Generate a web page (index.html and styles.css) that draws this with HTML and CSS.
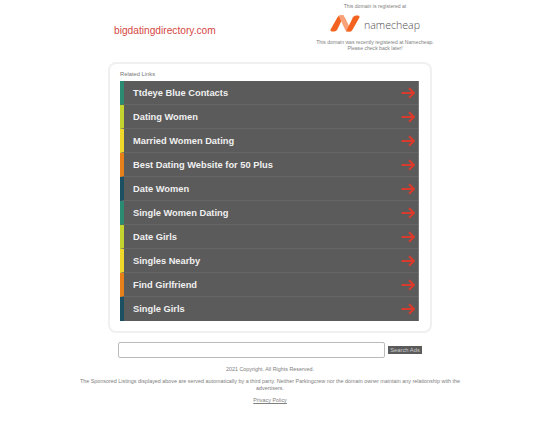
FILE: index.html
```html
<!DOCTYPE html>
<html lang="en">
<head>
    <meta charset="UTF-8">
    <title>bigdatingdirectory.com</title>
    <link rel="stylesheet" href="styles.css">
</head>
<body>
    <div class="wrapper">
        <header class="top">
            <h1 class="domain">bigdatingdirectory.com</h1>
            <div class="registrar">
                <p>This domain is registered at</p>
                <div class="logo">
                    <svg width="30" height="17" viewBox="0 0 30 17">
                        <path d="M0.6 14.6 L7.6 2 Q8.5 0.4 10.5 0.4 L14 0.4 L7.2 14.8 Q6.2 16.6 4.2 16.6 L1.8 16.6 Q0 16.6 0.6 14.6Z" fill="#f4621f"/>
                        <path d="M8.5 0.4 L11.5 0.4 Q14 0.4 15 2.6 L21.5 16.6 L18.5 16.6 Q16 16.6 15 14.4Z" fill="#f9a27a"/>
                        <path d="M16 16.6 L23 2.2 Q24 0.4 26 0.4 L28.2 0.4 Q30 0.4 29.4 2.4 L22.4 15 Q21.5 16.6 19.5 16.6Z" fill="#f4621f"/>
                    </svg>
                    <span class="logo-name">namecheap</span>
                </div>
                <p class="notice">This domain was recently registered at Namecheap.<br>Please check back later!</p>
            </div>
        </header>

        <main class="panel">
            <div class="panel-title">Related Links</div>
            <ul class="links">
                <li class="link c1"><a href="#">Ttdeye Blue Contacts</a><svg class="arrow" viewBox="0 0 14 12"><path d="M0.5 6 H13 M8 1.2 L13 6 L8 10.8" /></svg></li>
                <li class="link c2"><a href="#">Dating Women</a><svg class="arrow" viewBox="0 0 14 12"><path d="M0.5 6 H13 M8 1.2 L13 6 L8 10.8" /></svg></li>
                <li class="link c3"><a href="#">Married Women Dating</a><svg class="arrow" viewBox="0 0 14 12"><path d="M0.5 6 H13 M8 1.2 L13 6 L8 10.8" /></svg></li>
                <li class="link c4"><a href="#">Best Dating Website for 50 Plus</a><svg class="arrow" viewBox="0 0 14 12"><path d="M0.5 6 H13 M8 1.2 L13 6 L8 10.8" /></svg></li>
                <li class="link c5"><a href="#">Date Women</a><svg class="arrow" viewBox="0 0 14 12"><path d="M0.5 6 H13 M8 1.2 L13 6 L8 10.8" /></svg></li>
                <li class="link c1"><a href="#">Single Women Dating</a><svg class="arrow" viewBox="0 0 14 12"><path d="M0.5 6 H13 M8 1.2 L13 6 L8 10.8" /></svg></li>
                <li class="link c2"><a href="#">Date Girls</a><svg class="arrow" viewBox="0 0 14 12"><path d="M0.5 6 H13 M8 1.2 L13 6 L8 10.8" /></svg></li>
                <li class="link c3"><a href="#">Singles Nearby</a><svg class="arrow" viewBox="0 0 14 12"><path d="M0.5 6 H13 M8 1.2 L13 6 L8 10.8" /></svg></li>
                <li class="link c4"><a href="#">Find Girlfriend</a><svg class="arrow" viewBox="0 0 14 12"><path d="M0.5 6 H13 M8 1.2 L13 6 L8 10.8" /></svg></li>
                <li class="link c5"><a href="#">Single Girls</a><svg class="arrow" viewBox="0 0 14 12"><path d="M0.5 6 H13 M8 1.2 L13 6 L8 10.8" /></svg></li>
            </ul>
        </main>

        <form class="search">
            <input class="search-input" type="text">
            <button class="search-btn" type="button">Search Ads</button>
        </form>

        <footer class="footer">
            <p>2021 Copyright. All Rights Reserved.</p>
            <p>The Sponsored Listings displayed above are served automatically by a third party. Neither Parkingcrew nor the domain owner maintain any relationship with the advertisers.</p>
            <p><a href="#">Privacy Policy</a></p>
        </footer>
    </div>
</body>
</html>
```

FILE: styles.css
```css
body {
    margin: 0;
    background-color: #fff;
    font-family: "Liberation Sans", Arial, sans-serif;
    color: #666;
}

.wrapper {
    width: 390px;
    margin: 0 auto;
}

.top {
    display: flex;
    justify-content: space-between;
    height: 62px;
    padding-left: 39px;
    padding-right: 30px;
}

.domain {
    margin: 23px 0 0;
    font-size: 10.2px;
    line-height: 15px;
    font-weight: normal;
    color: #d5483f;
}

.registrar {
    width: 120px;
    text-align: center;
    font-size: 5.1px;
    color: #808080;
}

.registrar p {
    margin: 0;
    padding-top: 3px;
    line-height: 6px;
}

.registrar .notice {
    padding-top: 0;
}

.logo {
    display: flex;
    justify-content: center;
    align-items: center;
    gap: 4px;
    height: 18px;
    margin: 5px 0 7px;
}

.logo-name {
    margin-top: 3px;
    font-family: "Open Sans", sans-serif;
    font-size: 10.6px;
    font-weight: 300;
    color: #4d4d4d;
}

.panel {
    box-sizing: border-box;
    width: 324px;
    margin: 0 auto;
    padding: 6px 11px 10px 10px;
    background-color: #fff;
    border: 2px solid #f0f0f0;
    border-radius: 8px;
}

.panel-title {
    font-size: 5.8px;
    line-height: 9px;
    color: #777;
    margin-bottom: 2px;
}

.links {
    list-style: none;
    margin: 0;
    padding: 0;
    border-right: 1px solid #777;
}

.link {
    display: flex;
    justify-content: space-between;
    align-items: center;
    box-sizing: border-box;
    height: 24px;
    padding: 0 3px 0 9px;
    background-color: #5b5b5b;
    border-left: 4px solid #888;
    border-bottom: 1px solid #666;
}

.link:last-child {
    border-bottom: none;
}

.link a {
    color: #f0f0f0;
    font-size: 9.3px;
    font-weight: bold;
    text-decoration: none;
}

.c1 { border-left-color: #2a8a72; }
.c2 { border-left-color: #c3d42f; }
.c3 { border-left-color: #f0d82a; }
.c4 { border-left-color: #e8801a; }
.c5 { border-left-color: #1d4f63; }

.arrow {
    width: 14px;
    height: 12px;
    fill: none;
    stroke: #d93a2c;
    stroke-width: 2.2;
}

.search {
    display: flex;
    justify-content: center;
    align-items: center;
    gap: 3px;
    margin-top: 9px;
}

.search-input {
    box-sizing: border-box;
    width: 267px;
    height: 16px;
    margin: 0;
    padding: 0;
    background-color: #fff;
    border: 1px solid #bbb;
    border-radius: 2px;
}

.search-btn {
    width: 34px;
    height: 8px;
    margin: 0;
    padding: 0;
    border: none;
    background-color: #5b5b5b;
    color: #ccc;
    font-family: inherit;
    font-size: 5.8px;
    line-height: 8px;
}

.footer {
    margin-top: 8px;
    text-align: center;
    font-size: 5.4px;
    line-height: 6.4px;
    color: #808080;
}

.footer p {
    margin: 0 0 6px;
}

.footer a {
    color: #808080;
}
```
